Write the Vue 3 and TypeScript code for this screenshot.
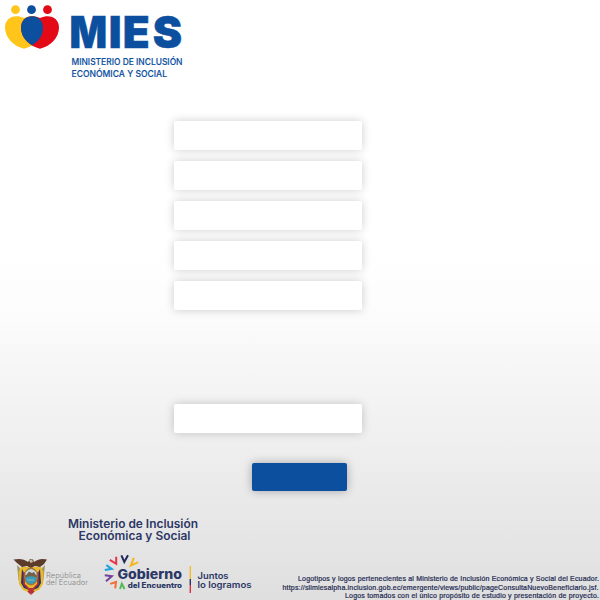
<script setup lang="ts">
const fields: string[] = ['nombres', 'apellidos', 'cedula', 'fecha', 'direccion', 'resultado']
const credits: string[] = [
  'Logotipos y logos pertenecientes al Ministerio de Inclusión Económica y Social del Ecuador.',
  'https://slimiesalpha.inclusion.gob.ec/emergente/views/public/pageConsultaNuevoBeneficiario.jsf.',
  'Logos tomados con el único propósito de estudio y presentación de proyecto.',
]
const rays = [
  { color: '#e6334a', d: 'M109.8 559.8L116.2 563.8L116.2 556.8' },
  { color: '#25285b', d: 'M121.4 555.3L124.3 562L128 555.3' },
  { color: '#f4b51e', d: 'M133.8 557.8L130.8 565.6L138.2 562.2' },
  { color: '#20a0dc', d: 'M106.4 565.2L111.7 568.8L104.8 569.9' },
  { color: '#73409b', d: 'M104.8 575.2L111.8 576.2L106 581.2' },
  { color: '#f36d32', d: 'M110.2 583.9L116 582L115.2 588.4' },
  { color: '#55b955', d: 'M120 589L121.8 583.8L124.5 589' },
]
</script>

<template>
  <main class="page">
    <header>
      <svg class="brand" viewBox="0 0 200 90" aria-label="MIES">
        <g fill="#ffc51b">
          <circle cx="15.5" cy="9.7" r="4.4" />
          <path d="M24 48.7C14 46.5 5 38 5 27.5C5 18 14 13.5 24 18C34 13.5 43 18 43 27.5C43 38 34 46.5 24 48.7Z" />
        </g>
        <g fill="#e30917">
          <circle cx="47.5" cy="9.7" r="4.4" />
          <path d="M40 48.7C30 46.5 21 38 21 27.5C21 18 30 13.5 40 18C50 13.5 59 18 59 27.5C59 38 50 46.5 40 48.7Z" />
        </g>
        <g fill="#0b4f9e">
          <circle cx="31.5" cy="9.7" r="4.4" />
          <path d="M32 45.2C25 41 21 35 21 28C21 20.5 26 16.2 32 16.2C38 16.2 43 20.5 43 28C43 35 39 41 32 45.2Z" />
          <g class="mies">
            <text x="69.6" y="48" textLength="37.6" lengthAdjust="spacingAndGlyphs">M</text>
            <text x="108.8 122.8 152.8" y="48">IES</text>
          </g>
          <text class="ministry" x="71.5" y="65.4" textLength="111" lengthAdjust="spacingAndGlyphs">MINISTERIO DE INCLUSIÓN</text>
          <text class="ministry" x="71.5" y="77.4" textLength="95.5" lengthAdjust="spacingAndGlyphs">ECONÓMICA Y SOCIAL</text>
        </g>
      </svg>
    </header>

    <form class="form" @submit.prevent>
      <input v-for="field in fields" :key="field" class="field" type="text" :name="field" />
      <button class="submit" type="submit"></button>
    </form>

    <footer class="footer">
      <svg class="logos" viewBox="0 510 265 90">
        <g class="navy medium" font-size="11.4">
          <text x="68" y="528.3" textLength="130" lengthAdjust="spacingAndGlyphs">Ministerio de Inclusión</text>
          <text x="78.5" y="540.1" textLength="112" lengthAdjust="spacingAndGlyphs">Económica y Social</text>
        </g>
        <g>
          <path d="M17 565L20 568L22 586L18.5 580Z M45 565L42 568L40 586L43.5 580Z" fill="#9b9667" />
          <path d="M21 567L18.5 572L19 584L23 590L28 592H34L39 590L43 584L43.5 572L41 567Z" fill="#e9b82e" />
          <path d="M22 569L24.5 574V584L29 590L24 588L21 583Z M40 569L37.5 574V584L33 590L38 588L41 583Z" fill="#273865" />
          <path d="M24 572V584L30 590V593L28 591M38 572V584L32 590V593L34 591" fill="none" stroke="#b82d32" stroke-width="1.7" />
          <path d="M13.5 559.5C19 558.5 24 558.5 28 562L30 559L33 559.5L34 562C38 558.5 43 558.5 47 559.5L44 564L40 567L35 566L31 568L27 566L22 567L17 563Z" fill="#5d3b29" />
          <path d="M29 560L32 559.5L33 562L30.5 563Z" fill="#c7bd9e" />
          <ellipse cx="31" cy="576.5" rx="7" ry="9" fill="#a1743a" />
          <path d="M25.5 572.5Q31 565.5 36.5 572.5V575H25.5Z" fill="#c9dadb" />
          <path d="M25.5 576L29 571.5L32 573L34 572L36.5 576V578H25.5Z" fill="#75614b" />
          <path d="M25.3 577.5Q31 575 36.7 577.5Q37 583 31 584Q25 583 25.3 577.5Z" fill="#3c9bb2" />
          <path d="M27 580H34" stroke="#91c8ce" stroke-width=".8" />
          <path d="M28 588H34L33 593H29Z" fill="#b72f34" />
        </g>
        <g class="republic">
          <text x="46" y="577.5" textLength="35" lengthAdjust="spacingAndGlyphs">República</text>
          <text x="46" y="584.8" textLength="42" lengthAdjust="spacingAndGlyphs">del Ecuador</text>
        </g>
        <path v-for="ray in rays" :key="ray.color" :d="ray.d" :stroke="ray.color" fill="none" stroke-width="2" />
        <g class="navy heavy">
          <text x="117.5" y="579.4" font-size="13.2" textLength="64.5" lengthAdjust="spacingAndGlyphs">Gobierno</text>
          <text x="127.8" y="588.2" font-size="7.3" textLength="54.2" lengthAdjust="spacingAndGlyphs">del Encuentro</text>
        </g>
        <path d="M190.3 566V579" stroke="#f3bd2a" stroke-width="1.4" />
        <path d="M190.3 579V585" stroke="#28305f" stroke-width="1.4" />
        <path d="M190.3 585V593" stroke="#dc3042" stroke-width="1.4" />
        <g class="navy medium" font-size="8.7">
          <text x="197.5" y="578.5" textLength="31" lengthAdjust="spacingAndGlyphs">Juntos</text>
          <text x="197.5" y="587.8" textLength="54" lengthAdjust="spacingAndGlyphs">lo logramos</text>
        </g>
      </svg>
      <svg class="credits" viewBox="270 570 330 30">
        <text x="298" y="581" textLength="301" lengthAdjust="spacing">{{ credits[0] }}</text>
        <text x="282.5" y="590" textLength="316" lengthAdjust="spacing">{{ credits[1] }}</text>
        <text x="345" y="598" textLength="254" lengthAdjust="spacing">{{ credits[2] }}</text>
      </svg>
    </footer>
  </main>
</template>

<style>
body { margin: 0; }
</style>
<style scoped>
.page {
  display: flex;
  flex-direction: column;
  width: 600px;
  height: 600px;
  overflow: hidden;
  background: linear-gradient(0deg, #dfdfdf 0%, #f3f3f3 33%, #fdfdfd 50%, #fff 60%);
}
header { height: 121px; flex: none; }
.brand { display: block; width: 200px; height: 90px; }
.mies { font: 900 44px Inter, sans-serif; stroke: #0b4f9e; stroke-width: .5px; }
.ministry { font: 500 9px Inter, sans-serif; stroke: #0b4f9e; stroke-width: .15px; }
.form {
  display: flex;
  flex-direction: column;
  gap: 11px;
  padding-left: 174px;
}
.field, .submit {
  box-sizing: border-box;
  margin: 0;
  padding: 0;
  border: 0;
  border-radius: 2px;
  box-shadow: 0 0 10px rgba(0, 0, 0, .2);
}
.field { width: 188px; height: 29px; background: #fff; outline: none; font: 12px "Liberation Sans", sans-serif; }
.field:nth-of-type(6) { margin-top: 83px; }
.submit { width: 95px; height: 28px; margin: 19px 0 0 78px; background: #0b4f9e; box-shadow: 0 0 10px rgba(0, 0, 0, .3); }
.footer { display: flex; align-items: flex-end; justify-content: space-between; margin-top: auto; height: 90px; }
.logos { width: 265px; height: 90px; }
.credits { width: 330px; height: 30px; font: 7px "Liberation Sans", Arial, sans-serif; fill: #1c2850; stroke: #1c2850; stroke-width: .2px; }
.navy { fill: #2b3765; }
.medium { font-family: Inter, sans-serif; font-weight: 600; }
.heavy { font-family: Inter, sans-serif; font-weight: 800; }
.republic { font: 300 7px Inter, sans-serif; fill: #858585; }
</style>
